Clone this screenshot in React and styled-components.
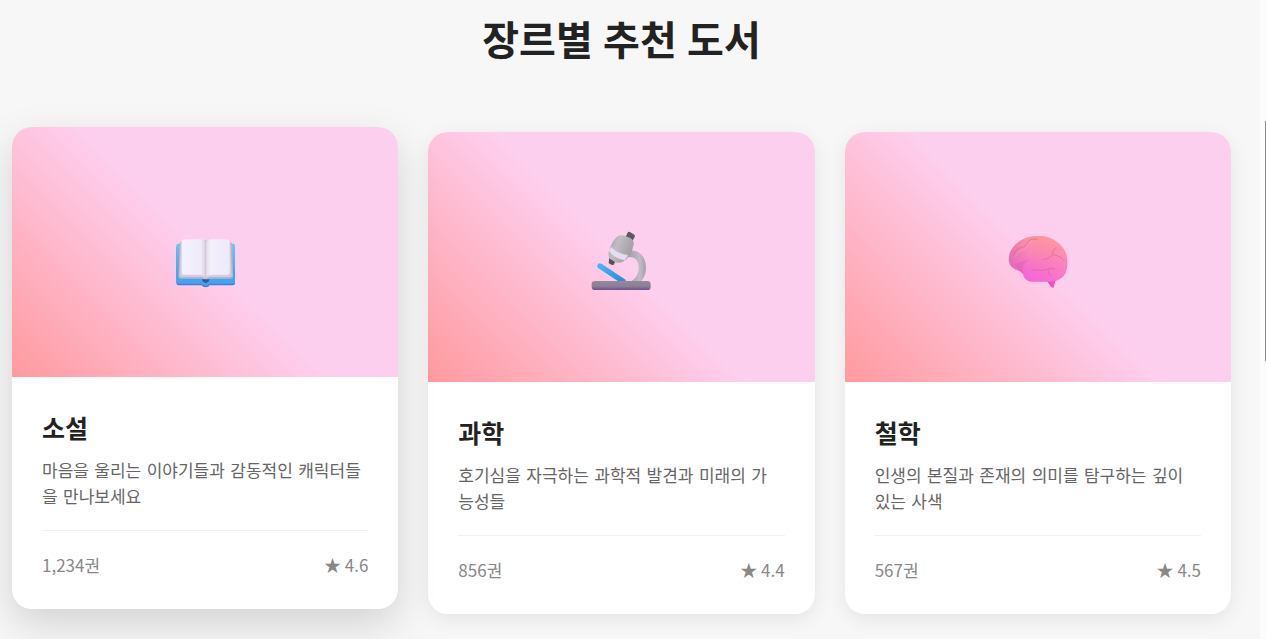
import React from "react";
import styled, { createGlobalStyle } from "styled-components";

const GlobalStyle = createGlobalStyle`
  * {
    margin: 0;
    padding: 0;
    box-sizing: border-box;
  }
  body {
    background: #f7f7f7;
    color: #222;
    font-family: "Noto Sans CJK KR", sans-serif;
    line-height: 1.6;
  }
`;

const BookIcon = () => (
  <Icon viewBox="24 -39 192 240" aria-hidden="true">
    <defs>
      <linearGradient id="cover" x1="0" y1="0" x2="0" y2="1">
        <stop offset="0" stopColor="#6cc5f3" />
        <stop offset="0.7" stopColor="#3fa9ef" />
        <stop offset="1" stopColor="#3aa4f6" />
      </linearGradient>
      <linearGradient id="pageLeft" x1="0" y1="0" x2="1" y2="0">
        <stop offset="0" stopColor="#f5f1fc" />
        <stop offset="0.8" stopColor="#f0ebf9" />
        <stop offset="1" stopColor="#d8cfe0" />
      </linearGradient>
      <linearGradient id="pageRight" x1="0" y1="0" x2="1" y2="0">
        <stop offset="0" stopColor="#e2daea" />
        <stop offset="0.2" stopColor="#f4effb" />
        <stop offset="1" stopColor="#eeeafb" />
      </linearGradient>
    </defs>
    <path
      d="M38 62H205Q210 62 210 68V174Q210 181 203 181H134Q131 187 122 187Q113 187 110 181H41Q34 181 34 174V68Q34 62 38 62Z"
      fill="#4a7bd0"
    />
    <path
      d="M38 56H205Q210 56 210 62V170Q210 176 203 176H134Q131 182 122 182Q113 182 110 176H41Q34 176 34 170V62Q34 56 38 56Z"
      fill="url(#cover)"
    />
    <path
      d="M44 54Q52 47 60 47H186Q198 50 202 56L204 154Q204 161 196 161H132L122 168L112 161H47Q40 161 40 154Z"
      fill="#bdb2c9"
    />
    <path
      d="M47 54L196 52L200 151Q199 155 194 156H130L122 162L114 156H50Q44 156 44 151Z"
      fill="#d6ccde"
    />
    <path
      d="M58 43H106Q118 43 122 54V157Q116 149 106 149H58Q50 149 50 142V51Q50 43 58 43Z"
      fill="url(#pageLeft)"
    />
    <path
      d="M138 43H184Q194 43 194 52V142Q194 149 186 149H138Q128 149 122 157V54Q126 43 138 43Z"
      fill="url(#pageRight)"
    />
    <path d="M122 54V158" stroke="#c8bed3" strokeWidth="2" />
    <path d="M111 163H133Q132 173 122 174Q112 173 111 163Z" fill="#305d91" />
  </Icon>
);

const MicroscopeIcon = () => (
  <Icon viewBox="28 -15 192 240" aria-hidden="true">
    <defs>
      <linearGradient id="arm" x1="0" y1="0" x2="1" y2="0">
        <stop offset="0" stopColor="#a59eaa" />
        <stop offset="0.65" stopColor="#c1bac7" />
        <stop offset="1" stopColor="#a79eae" />
      </linearGradient>
      <linearGradient id="tube" x1="0" y1="0" x2="1" y2="0.5">
        <stop offset="0" stopColor="#9c979f" />
        <stop offset="0.4" stopColor="#c1bdc3" />
        <stop offset="1" stopColor="#a09ba4" />
      </linearGradient>
      <linearGradient id="base" x1="0" y1="0" x2="0" y2="1">
        <stop offset="0" stopColor="#948a98" />
        <stop offset="0.6" stopColor="#8a7e96" />
        <stop offset="1" stopColor="#6c5187" />
      </linearGradient>
      <linearGradient id="stage" x1="0" y1="0" x2="1" y2="1">
        <stop offset="0" stopColor="#45b4f6" />
        <stop offset="1" stopColor="#2b8ddd" />
      </linearGradient>
    </defs>
    <path
      d="M150 86C182 82 199 108 199 137C199 158 190 174 179 182H148C171 169 178 154 177 134C177 116 167 104 146 105Z"
      fill="url(#arm)"
    />
    <path
      d="M61 132L130 178"
      stroke="url(#stage)"
      strokeWidth="16"
      strokeLinecap="round"
    />
    <path d="M89 106L107 119L102 128Q96 131 87 123Z" fill="#57525a" />
    <path
      d="M145 30Q148 28 152 31L164 38Q167 41 165 45L158 57L138 44Z"
      fill="#5d5762"
    />
    <path
      d="M110 46Q119 37 135 41L150 47Q164 54 162 67L156 90Q146 111 126 121Q116 125 105 119L92 111Q85 107 87 93Q90 75 99 60Z"
      fill="url(#tube)"
    />
    <path d="M95 75Q111 94 146 100L135 115Q103 109 88 86Z" fill="#e6ddf2" />
    <path d="M95 75Q111 94 146 100" fill="none" stroke="#cbc3d1" strokeWidth="2" />
    <rect x="36" y="177" width="177" height="27" rx="10" fill="url(#base)" />
  </Icon>
);

const BrainIcon = () => (
  <Icon viewBox="24 -24 192 240" aria-hidden="true">
    <defs>
      <linearGradient id="brain" x1="0.65" y1="0" x2="0.4" y2="1">
        <stop offset="0" stopColor="#ffa197" />
        <stop offset="0.4" stopColor="#fc88b4" />
        <stop offset="0.75" stopColor="#f770d0" />
        <stop offset="1" stopColor="#f964e0" />
      </linearGradient>
      <linearGradient id="brainShade" x1="0" y1="0" x2="1" y2="0">
        <stop offset="0" stopColor="#c9609a" stopOpacity="0.45" />
        <stop offset="0.35" stopColor="#ea6cb8" stopOpacity="0.1" />
        <stop offset="1" stopColor="#ff8fb0" stopOpacity="0.3" />
      </linearGradient>
    </defs>
    <path d="M145 166L172 168L166 190L158 184Z" fill="#ee4fc0" />
    <path
      d="M33 106C31 86 42 64 62 51C77 38 100 31 123 33C143 32 163 39 178 52C198 66 209 88 208 113C208 132 204 147 193 157C181 168 164 171 144 170H100C87 168 78 161 76 149C74 143 66 139 56 135C42 130 34 120 33 106Z"
      fill="url(#brain)"
    />
    <path
      d="M33 106C31 86 42 64 62 51C77 38 100 31 123 33C143 32 163 39 178 52C198 66 209 88 208 113C208 132 204 147 193 157C181 168 164 171 144 170H100C87 168 78 161 76 149C74 143 66 139 56 135C42 130 34 120 33 106Z"
      fill="url(#brainShade)"
    />
    <path
      d="M76 147C70 130 76 112 96 104C79 103 67 112 50 119Q61 136 76 147Z"
      fill="#c94a9f"
      opacity="0.22"
    />
    <g fill="none" stroke="#dc6594" strokeWidth="3" strokeLinecap="round" opacity="0.7">
      <path d="M47 91C49 72 65 68 75 66C86 64 88 53 93 46C102 40 111 42 118 43" />
      <path d="M138 103C151 101 162 95 164 86C165 77 168 73 173 69" />
      <path d="M164 88C179 91 192 98 199 107" />
      <path d="M102 135C116 132 127 139 140 135C149 132 158 129 170 132" />
      <path d="M151 137Q151 147 157 153" />
    </g>
    <path
      d="M53 93C57 79 70 78 78 72C91 65 91 53 101 49"
      fill="none"
      stroke="#fba3cb"
      strokeWidth="3"
      strokeLinecap="round"
      opacity="0.6"
    />
  </Icon>
);

const genres = [
  {
    name: "소설",
    text: "마음을 울리는 이야기들과 감동적인 캐릭터들을 만나보세요",
    count: "1,234권",
    rating: "4.6",
    icon: <BookIcon />,
    raised: true,
  },
  {
    name: "과학",
    text: "호기심을 자극하는 과학적 발견과 미래의 가능성들",
    count: "856권",
    rating: "4.4",
    icon: <MicroscopeIcon />,
  },
  {
    name: "철학",
    text: "인생의 본질과 존재의 의미를 탐구하는 깊이 있는 사색",
    count: "567권",
    rating: "4.5",
    icon: <BrainIcon />,
  },
];

const App = () => {
  return (
    <>
      <GlobalStyle />
      <Page>
        <Section>
          <Heading>장르별 추천 도서</Heading>
          <Cards>
            {genres.map((genre) => {
              const { name, text, count, rating, icon, raised } = genre;
              return (
                <Card key={name} $raised={raised}>
                  <Cover>{icon}</Cover>
                  <Body>
                    <Name>{name}</Name>
                    <Text>{text}</Text>
                    <Stats>
                      <span>{count}</span>
                      <span>★ {rating}</span>
                    </Stats>
                  </Body>
                </Card>
              );
            })}
          </Cards>
        </Section>
        <Track>
          <Thumb />
        </Track>
      </Page>
    </>
  );
};

const Page = styled.div`
  display: grid;
  grid-template-columns: 1fr 6px;
  min-height: 100vh;
  overflow: hidden;
`;

const Section = styled.main`
  padding: 8px 29px 24px 12px;
`;

const Heading = styled.h1`
  margin-bottom: 60px;
  font-family: "Noto Sans", "Noto Sans CJK KR", sans-serif;
  font-size: 40px;
  font-weight: 700;
  line-height: 64px;
  text-align: center;
`;

const Cards = styled.div`
  display: grid;
  grid-template-columns: repeat(3, 1fr);
  gap: 30px;
`;

const Card = styled.article`
  background: #fff;
  border-radius: 20px;
  overflow: hidden;
  transform: ${(props) => (props.$raised ? "translateY(-5px)" : "none")};
  box-shadow: ${(props) =>
    props.$raised
      ? "0 15px 40px rgba(0, 0, 0, 0.15)"
      : "0 5px 20px rgba(0, 0, 0, 0.08)"};
`;

const Cover = styled.div`
  display: flex;
  align-items: center;
  justify-content: center;
  height: 250px;
  background: linear-gradient(45deg, #ff9a9e 0%, #fecfef 50%, #fbcfed 52%);
`;

const Icon = styled.svg`
  width: 64px;
  height: 80px;
`;

const Body = styled.div`
  padding: 30px;
`;

const Name = styled.h2`
  margin-bottom: 10px;
  font-size: 25px;
  font-weight: 700;
  line-height: 41px;
`;

const Text = styled.p`
  margin-bottom: 20px;
  padding-right: 4px;
  color: #666;
  font-family: "DejaVu Sans", "Noto Sans CJK KR", sans-serif;
  font-size: 17px;
  line-height: 26px;
`;

const Stats = styled.div`
  display: flex;
  justify-content: space-between;
  padding-top: 20px;
  border-top: 1px solid #f0f0f0;
  color: #888;
  font-size: 17px;
  line-height: 28px;
`;

const Track = styled.div`
  display: flex;
  justify-content: flex-end;
  padding-top: 121px;
  background: #fcfcfc;
`;

const Thumb = styled.div`
  width: 1px;
  height: 240px;
  background: #888;
`;

export default App;
